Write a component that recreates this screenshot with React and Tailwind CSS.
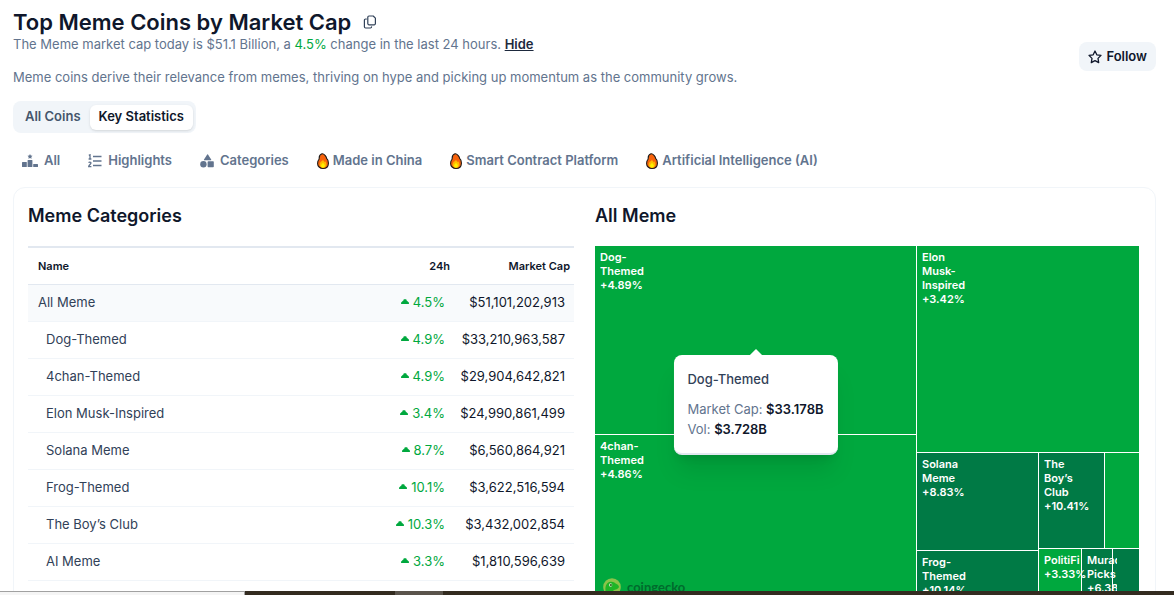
import React from 'react';
import { clsx } from 'clsx';

const categories = [
    { name: 'All Meme', change: '4.5%', cap: '$51,101,202,913', root: true },
    { name: 'Dog-Themed', change: '4.9%', cap: '$33,210,963,587' },
    { name: '4chan-Themed', change: '4.9%', cap: '$29,904,642,821' },
    { name: 'Elon Musk-Inspired', change: '3.4%', cap: '$24,990,861,499' },
    { name: 'Solana Meme', change: '8.7%', cap: '$6,560,864,921' },
    { name: 'Frog-Themed', change: '10.1%', cap: '$3,622,516,594' },
    { name: 'The Boy’s Club', change: '10.3%', cap: '$3,432,002,854' },
    { name: 'AI Meme', change: '3.3%', cap: '$1,810,596,639' },
];

function CopyIcon() {
    return (
        <svg className="h-3.5 w-3.5" viewBox="0 0 14 14" fill="none" stroke="currentColor" strokeWidth="1.2" strokeLinejoin="round">
            <path d="M6 1h4.2L12.4 3.2V8.600a1.200 1.200 0 0 1-1.200 1.200H6a1.200 1.200 0 0 1-1.200-1.200V2.200A1.200 1.200 0 0 1 6 1z" />
            <path d="M3.400 4H2.600A1.200 1.200 0 0 0 1.400 5.200v6.600A1.200 1.200 0 0 0 2.600 13h4.800a1.200 1.200 0 0 0 1.200-1.200" strokeLinecap="round" />
        </svg>
    );
}

function StarIcon() {
    return (
        <svg className="h-3.5 w-3.5" viewBox="0 0 14 14" fill="none" stroke="currentColor" strokeWidth="1.3" strokeLinejoin="round">
            <path d="M7 1l1.800 3.800 4.200.6-3 3 .7 4.200L7 10.600l-3.700 2 .7-4.200-3-3 4.200-.6z" />
        </svg>
    );
}

function PodiumIcon() {
    return (
        <svg className="h-3.5 w-4" viewBox="0 0 16 14" fill="currentColor">
            <path d="M8 0l.8 1.600 1.700.2-1.200 1.200.3 1.700L8 3.900l-1.600.8.3-1.700-1.200-1.200 1.700-.2z" />
            <rect x="0" y="8" width="4.800" height="5" rx="0.500" />
            <rect x="5.600" y="6" width="4.800" height="7" rx="0.500" />
            <rect x="11.200" y="10" width="4.800" height="3" rx="0.500" />
        </svg>
    );
}

function RankListIcon() {
    return (
        <svg className="h-3.5 w-3.5" viewBox="0 0 14 14" fill="none" stroke="currentColor">
            <path d="M5 2.500h8.500M5 7h8.500M5 11.500h8.500" strokeWidth="1.600" />
            <path d="M.8 1.400l1.200-.6v4M.6 5h2.800M.7 8.800c.3-.8 2.300-.9 2.300.3 0 1-2.200 2-2.300 3.500h2.700" strokeWidth="1.300" />
        </svg>
    );
}

function ShapesIcon() {
    return (
        <svg className="h-3.5 w-3.5" viewBox="0 0 14 14" fill="currentColor">
            <path d="M7.200 0.400a.5.500 0 0 1 .8 0l3.200 5a.5.500 0 0 1-.4.8H4.400a.5.500 0 0 1-.4-.8z" />
            <circle cx="3.400" cy="10.200" r="3.200" />
            <rect x="7.600" y="7.200" width="6.200" height="6" rx="0.800" />
        </svg>
    );
}

function FireIcon() {
    return (
        <svg className="h-4 w-3" viewBox="0 0 12 16">
            <path d="M5 .8C7 .6 9.600 3.400 9.600 5.400c1 .8 1.900 2.600 1.800 5-.1 3-2.300 5-5.400 5s-5.400-2-5.400-5c0-2 .7-3.400 1.600-4.400C2 3.600 3.200 1.300 5 .8z" fill="#f7630c" stroke="#1c1917" strokeWidth="1.100" />
            <path d="M6 6.500c.4 1.500 1.300 1.500 1.500 2.500.6-.2.700-.8.700-.8 1 1.300 1.400 2.600 1.200 3.800-.3 1.700-1.600 2.700-3.400 2.700s-3.100-1-3.400-2.700c-.2-1.600.8-2.800 1.600-3.500C5.300 7.800 6 7.300 6 6.500z" fill="#ffb900" />
            <path d="M6 9.500c.2 1.200 1.900 1.700 1.900 3.300 0 1.200-.8 1.900-1.900 1.900s-1.900-.7-1.900-1.900C4.100 11.300 5.800 10.800 6 9.500z" fill="#fff100" />
        </svg>
    );
}

function GeckoIcon() {
    return (
        <svg className="h-[18px] w-[18px]" viewBox="0 0 18 18">
            <circle cx="9" cy="9" r="8.800" fill="#8bc34a" />
            <path d="M2.500 13c-.4-4 .5-8.600 5-9.200 3-.3 4.500 1.300 6.500 2.400 1.600 1 2.400 2 1.600 3.600-1 1.800-4.600 1.600-5.600 3.200-.6 1.200 0 2.600 0 4.600-3.500.4-6.500-1.600-7.500-4.600z" fill="#1fb526" />
            <circle cx="7.600" cy="7" r="1.700" fill="#c8e6c9" />
            <circle cx="7.900" cy="7" r="1.100" fill="#33691e" />
        </svg>
    );
}

function CaretUp() {
    return (
        <svg className="h-[5px] w-2" viewBox="0 0 8 5" fill="currentColor">
            <path d="M3.500.3a.8.800 0 0 1 1 0L7.800 3.500c.5.600.2 1.500-.6 1.500H.8C0 5-.3 4.100.2 3.500z" />
        </svg>
    );
}

const filters = [
    { label: 'All', icon: PodiumIcon },
    { label: 'Highlights', icon: RankListIcon },
    { label: 'Categories', icon: ShapesIcon },
    { label: 'Made in China', icon: FireIcon, tight: true },
    { label: 'Smart Contract Platform', icon: FireIcon, tight: true },
    { label: 'Artificial Intelligence (AI)', icon: FireIcon, tight: true },
];

function Tile({ lines = [], change, dark, className, children }) {
    return (
        <div className={clsx('relative min-w-0 min-h-0 basis-0', dark ? 'bg-[#007a45]' : 'bg-[#00a83e]', className)}>
            {/* the label may run past the edge of a narrow tile */}
            <div className="relative z-10 ml-[5px] w-full overflow-hidden pt-1 text-[11px] leading-[14px] font-semibold text-white">
                {lines.map((line) => (
                    <div key={line}>{line}</div>
                ))}
                <div>{change}</div>
            </div>
            {children}
        </div>
    );
}

function Tooltip() {
    return (
        <div className="absolute top-[109px] left-1/2 z-20 -translate-x-1/2 rounded-lg border-b-2 border-slate-200 bg-white px-3.5 pt-3.5 pb-3.5 text-[13px] leading-5 whitespace-nowrap shadow-xl">
            <div className="absolute -top-1 left-1/2 h-2.5 w-2.5 -translate-x-1/2 rotate-45 bg-white" />
            <div className="mb-2.5 font-medium text-slate-700">Dog-Themed</div>
            <div className="text-slate-500">
                Market Cap: <span className="font-semibold text-slate-900">$33.178B</span>
            </div>
            <div className="text-slate-500">
                Vol: <span className="font-semibold text-slate-900">$3.728B</span>
            </div>
        </div>
    );
}

function Treemap() {
    return (
        <div className="flex h-[372px] gap-px bg-white">
            <div className="flex min-w-0 grow-[321] basis-0 flex-col gap-px">
                <Tile lines={['Dog-', 'Themed']} change="+4.89%" className="grow-[188]">
                    <Tooltip />
                </Tile>
                <Tile lines={['4chan-', 'Themed']} change="+4.86%" className="grow-[183]">
                    <div className="absolute bottom-[22px] left-2 flex items-center gap-1.5">
                        <GeckoIcon />
                        <span className="font-[Lato,sans-serif] text-[13px] leading-4 font-bold text-[#006b2d]">coingecko</span>
                    </div>
                </Tile>
            </div>
            <div className="flex min-w-0 grow-[222] basis-0 flex-col gap-px">
                <Tile lines={['Elon', 'Musk-', 'Inspired']} change="+3.42%" className="grow-[206]" />
                <div className="flex min-h-0 grow-[165] basis-0 gap-px">
                    <div className="flex min-w-0 grow-[121] basis-0 flex-col gap-px">
                        <Tile lines={['Solana', 'Meme']} change="+8.83%" dark className="grow-[97]" />
                        <Tile lines={['Frog-', 'Themed']} change="+10.14%" dark className="grow-[67]" />
                    </div>
                    <div className="flex min-w-0 grow-[100] basis-0 flex-col gap-px">
                        <div className="flex min-h-0 grow-[95] basis-0 gap-px">
                            <Tile lines={['The', 'Boy’s', 'Club']} change="+10.41%" dark className="grow-[65]" />
                            <Tile className="grow-[34]" />
                        </div>
                        <div className="flex min-h-0 grow-[69] basis-0 gap-px">
                            <Tile lines={['PolitiFi']} change="+3.33%" className="grow-[42]" />
                            <Tile lines={['Murad', 'Picks']} change="+6.38%" dark className="grow-[30]" />
                            <Tile dark className="grow-[26]" />
                        </div>
                    </div>
                </div>
            </div>
        </div>
    );
}

function CategoryTable() {
    return (
        <table className="w-full text-[13px] leading-5">
            <thead>
                <tr className="h-[37px] border-t-2 border-b border-slate-200 text-[11px] text-slate-900">
                    <th className="pl-2.5 text-left font-semibold">Name</th>
                    <th className="w-20 pr-1 text-right font-semibold">24h</th>
                    <th className="w-[120px] pr-1 text-right font-semibold">Market Cap</th>
                </tr>
            </thead>
            <tbody>
                {categories.map((c) => (
                    <tr key={c.name} className={clsx('h-[37px] border-b border-slate-100', c.root && 'bg-slate-50')}>
                        <td className={clsx('pb-0.5 text-slate-700', c.root ? 'pl-2.5' : 'pl-[18px]')}>{c.name}</td>
                        <td className="pr-[9px] pb-0.5 text-[#00a83e]">
                            <div className="flex items-center justify-end gap-1">
                                <CaretUp />
                                {c.change}
                            </div>
                        </td>
                        <td className="pr-[9px] pb-0.5 text-right text-slate-900">{c.cap}</td>
                    </tr>
                ))}
            </tbody>
        </table>
    );
}

export default function App() {
    return (
        <div className="flex h-screen flex-col overflow-hidden bg-white font-[Inter,sans-serif] text-slate-900">
            <main className="min-h-0 flex-1 overflow-hidden pt-2.5 pr-[18px] pl-[13px]">
                <header className="flex items-start justify-between">
                    <div>
                        <div className="flex items-center gap-3">
                            <h1 className="text-[22px] leading-6 font-semibold">Top Meme Coins by Market Cap</h1>
                            <button type="button" aria-label="Copy" className="text-slate-700">
                                <CopyIcon />
                            </button>
                        </div>
                        <p className="text-[13px] leading-5 text-slate-500">
                            The Meme market cap today is $51.1 Billion, a <span className="text-[#00a83e]">4.5%</span> change in the last 24 hours.{' '}
                            <a href="#hide" className="font-semibold text-slate-800 underline">Hide</a>
                        </p>
                        <p className="mt-[13px] text-[13px] leading-5 text-slate-500">
                            Meme coins derive their relevance from memes, thriving on hype and picking up momentum as the community grows.
                        </p>
                    </div>
                    <button type="button" className="mt-8 flex h-[29px] items-center gap-1 rounded-lg bg-slate-100 px-[9px] text-[13px] font-semibold">
                        <StarIcon />
                        Follow
                    </button>
                </header>

                <div className="mt-3.5 flex h-8 w-fit items-center rounded-lg bg-slate-100 px-[3px] text-[13px] font-semibold">
                    <button type="button" className="h-[25px] px-[9px] text-slate-600">All Coins</button>
                    <button type="button" className="h-[25px] rounded-md bg-white px-[9px] text-slate-900 shadow-sm">Key Statistics</button>
                </div>

                <nav className="mt-4 flex h-6 items-center gap-7 pl-[9px] text-[13px] font-semibold text-slate-500">
                    {filters.map(({ label, icon: Icon, tight }) => (
                        <a key={label} href="#filter" className={clsx('flex items-center', tight ? 'gap-1' : 'gap-1.5')}>
                            <Icon />
                            {label}
                        </a>
                    ))}
                </nav>

                <div className="mt-3.5 grid grid-cols-[546fr_544fr] gap-[21px] rounded-xl border border-slate-100 pt-4 pr-4 pb-4 pl-3.5">
                    <section>
                        <h2 className="mb-[18px] text-lg leading-6 font-semibold">Meme Categories</h2>
                        <CategoryTable />
                    </section>
                    <section>
                        <h2 className="mb-[18px] text-lg leading-6 font-semibold">All Meme</h2>
                        <Treemap />
                    </section>
                </div>
            </main>
            <footer className="flex h-1 shrink-0 bg-[#332b20]">
                <div className="w-[245px] border-t border-r border-neutral-400 bg-neutral-100" />
                <div className="ml-[150px] w-12 bg-[#5a544c]" />
            </footer>
        </div>
    );
}
